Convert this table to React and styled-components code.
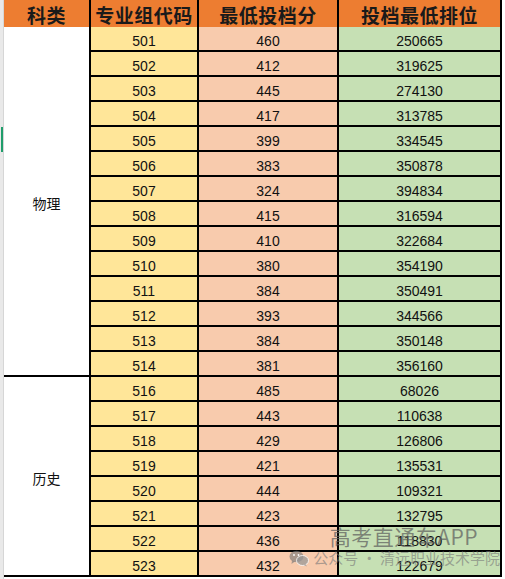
import React from "react";
import styled, { createGlobalStyle } from "styled-components";

const GlobalStyle = createGlobalStyle`
  html, body {
    margin: 0;
    padding: 0;
    background: #ffffff;
  }
  body {
    font-family: "Liberation Sans", "Noto Sans CJK SC", sans-serif;
  }
`;

const Page = styled.div`
  display: flex;
  width: 505px;
  height: 579px;
  overflow: hidden;
  position: relative;
  background: #ffffff;
`;

const EdgeStrip = styled.div`
  width: 3px;
  flex: none;
  background: #e9e9e9;
  border-right: 1px solid #d6d6d6;
  position: relative;
`;

const EdgeMark = styled.div`
  position: absolute;
  left: 1px;
  top: 127px;
  width: 2px;
  height: 25px;
  background: #1f9d6b;
`;

const Sheet = styled.div`
  display: grid;
  grid-template-columns: 85px 108px 140px 163px;
  grid-template-rows: 27px repeat(22, 25px);
  flex: none;
  border-right: 2px solid #000;
  height: 577px;
`;

const HeadCell = styled.div`
  background: #ed7d31;
  display: flex;
  align-items: center;
  justify-content: center;
  font-family: "Noto Sans CJK SC", sans-serif;
  font-weight: 700;
  font-size: 19px;
  color: #1a1a1a;
  letter-spacing: 0.5px;
  border-left: ${(p) => (p.$first ? "0" : "2px solid #000")};
  padding-top: 1px;
`;

const GroupCell = styled.div`
  grid-column: 1;
  grid-row: ${(p) => p.$row} / span ${(p) => p.$span};
  display: flex;
  align-items: center;
  justify-content: center;
  background: #ffffff;
  border-bottom: 2px solid #000;
  font-family: "Noto Sans CJK SC", sans-serif;
  font-size: 14px;
  color: #111;
  padding-top: 3px;
`;

const tones = {
  code: "#ffe699",
  score: "#f8cbad",
  rank: "#c6e0b4",
};

const DataCell = styled.div`
  background: ${(p) => tones[p.$tone]};
  border-left: 2px solid #000;
  border-bottom: 2px solid #000;
  display: flex;
  align-items: center;
  justify-content: center;
  font-size: 14px;
  color: #111;
  padding-top: 5px;
`;

const Watermark = styled.div`
  position: absolute;
  right: 5px;
  bottom: 12px;
  display: flex;
  flex-direction: column;
  align-items: flex-end;
  pointer-events: none;
  font-family: "Noto Sans CJK SC", sans-serif;
`;

const WatermarkTitle = styled.div`
  font-size: 21px;
  color: rgba(95, 95, 95, 0.72);
  letter-spacing: 0.5px;
  line-height: 22px;
  margin-right: 22px;
  margin-bottom: 2px;
`;

const WatermarkLine = styled.div`
  display: flex;
  align-items: center;
  gap: 4px;
  font-size: 15px;
  line-height: 18px;
  color: rgba(120, 120, 120, 0.62);
`;

const WechatIcon = () => (
  <svg width="20" height="17" viewBox="0 0 20 17">
    <ellipse cx="7.5" cy="6.5" rx="7" ry="5.8" fill="rgba(120,120,120,0.62)" />
    <path d="M3 10.5 L2.5 14 L6 11.5 Z" fill="rgba(120,120,120,0.62)" />
    <ellipse cx="13.5" cy="10.5" rx="6" ry="5" fill="rgba(150,150,150,0.72)" stroke="#fff" strokeWidth="0.8" />
    <path d="M16.5 14 L18 16.5 L14.5 15 Z" fill="rgba(150,150,150,0.72)" />
    <circle cx="5" cy="5" r="0.9" fill="#fff" />
    <circle cx="9.5" cy="5" r="0.9" fill="#fff" />
  </svg>
);

const physics = [
  ["501", "460", "250665"],
  ["502", "412", "319625"],
  ["503", "445", "274130"],
  ["504", "417", "313785"],
  ["505", "399", "334545"],
  ["506", "383", "350878"],
  ["507", "324", "394834"],
  ["508", "415", "316594"],
  ["509", "410", "322684"],
  ["510", "380", "354190"],
  ["511", "384", "350491"],
  ["512", "393", "344566"],
  ["513", "384", "350148"],
  ["514", "381", "356160"],
];

const history = [
  ["516", "485", "68026"],
  ["517", "443", "110638"],
  ["518", "429", "126806"],
  ["519", "421", "135531"],
  ["520", "444", "109321"],
  ["521", "423", "132795"],
  ["522", "436", "118830"],
  ["523", "432", "122679"],
];

const rows = [...physics, ...history];

const App = () => {
  return (
    <>
      <GlobalStyle />
      <Page>
        <EdgeStrip>
          <EdgeMark />
        </EdgeStrip>
        <Sheet>
          <HeadCell $first>科类</HeadCell>
          <HeadCell>专业组代码</HeadCell>
          <HeadCell>最低投档分</HeadCell>
          <HeadCell>投档最低排位</HeadCell>

          <GroupCell $row={2} $span={physics.length}>物理</GroupCell>
          <GroupCell $row={2 + physics.length} $span={history.length}>历史</GroupCell>

          {rows.map(([code, score, rank], i) => (
            <React.Fragment key={code}>
              <DataCell $tone="code" style={{ gridRow: i + 2, gridColumn: 2 }}>{code}</DataCell>
              <DataCell $tone="score" style={{ gridRow: i + 2, gridColumn: 3 }}>{score}</DataCell>
              <DataCell $tone="rank" style={{ gridRow: i + 2, gridColumn: 4 }}>{rank}</DataCell>
            </React.Fragment>
          ))}
        </Sheet>
        <Watermark>
          <WatermarkTitle>高考直通车APP</WatermarkTitle>
          <WatermarkLine>
            <WechatIcon />
            公众号 · 清远职业技术学院
          </WatermarkLine>
        </Watermark>
      </Page>
    </>
  );
};

export default App;
